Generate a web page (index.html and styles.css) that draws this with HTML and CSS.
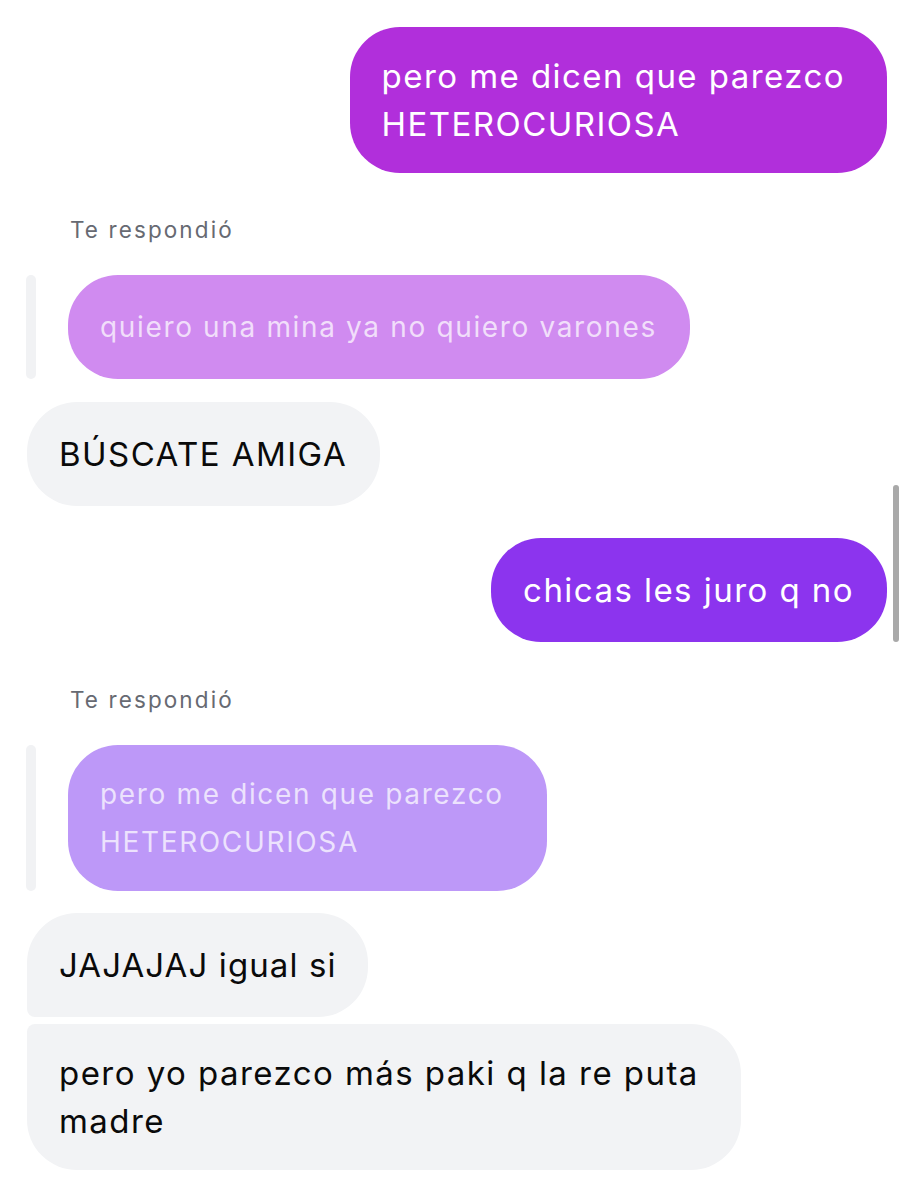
FILE: index.html
```html
<!DOCTYPE html>
<html lang="es">
<head>
<meta charset="utf-8">
<title>Chat</title>
<link rel="stylesheet" href="styles.css">
</head>
<body>
<div class="chat">
  <div class="bubble sent sent-a multi">pero me dicen que parezco<br>HETEROCURIOSA</div>

  <div class="label label-first">Te respondió</div>
  <div class="reply reply-first">
    <div class="reply-bar"></div>
    <div class="quote quote-a">quiero una mina ya no quiero varones</div>
  </div>
  <div class="bubble received gap-23">BÚSCATE AMIGA</div>

  <div class="bubble sent sent-b gap-32">chicas les juro q no</div>

  <div class="label label-second">Te respondió</div>
  <div class="reply reply-second">
    <div class="reply-bar"></div>
    <div class="quote quote-b multi">pero me dicen que parezco<br>HETEROCURIOSA</div>
  </div>
  <div class="bubble received group-top gap-22 tight">JAJAJAJ igual si</div>
  <div class="bubble received group-bottom multi gap-7">pero yo parezco más paki q la re puta<br>madre</div>
</div>
<div class="scrollbar"></div>
</body>
</html>
```
FILE: styles.css
```css
html, body {
  margin: 0;
  padding: 0;
  background: #ffffff;
}
body {
  font-family: Inter, "Noto Sans", "Liberation Sans", sans-serif;
  width: 907px;
  height: 1200px;
  overflow: hidden;
  position: relative;
}
.chat {
  display: flex;
  flex-direction: column;
  align-items: flex-start;
  padding: 27px 20px 0 27px;
}
.bubble {
  font-size: 33px;
  letter-spacing: 1.45px;
  line-height: 48px;
  padding: 28px 33px 28px 32px;
  border-radius: 50px;
  box-sizing: border-box;
  white-space: nowrap;
}
.bubble.multi {
  padding: 25px 42px 25px 32px;
}
.bubble.tight {
  letter-spacing: 1.1px;
  padding-right: 31px;
}
.sent {
  align-self: flex-end;
  color: #ffffff;
}
.sent-a { background: #b12fdb; }
.sent-b { background: #8c34ee; }
.received {
  background: #f2f3f5;
  color: #0a0a0a;
}
.group-top { border-bottom-left-radius: 8px; }
.group-bottom { border-top-left-radius: 8px; }
.gap-7 { margin-top: 7px; }
.gap-22 { margin-top: 22px; }
.gap-23 { margin-top: 23px; }
.gap-32 { margin-top: 32px; }
.label {
  font-size: 22.5px;
  letter-spacing: 2.1px;
  line-height: 28px;
  color: #676a72;
  margin-left: 43px;
}
.label-first { margin-top: 43px; }
.label-second { margin-top: 44px; }
.reply {
  display: flex;
  align-items: stretch;
  gap: 32px;
  margin-top: 31px;
}
.reply-bar {
  width: 10px;
  border-radius: 5px;
  background: #f1f2f4;
  margin-left: -1px;
}
.quote {
  font-size: 28px;
  letter-spacing: 1.65px;
  line-height: 48px;
  padding: 28px 33px 28px 32px;
  border-radius: 50px;
  color: rgba(255, 255, 255, 0.72);
  white-space: nowrap;
}
.quote.multi {
  padding: 25px 43px 25px 32px;
}
.quote-a { background: #d08bf0; }
.quote-b { background: #bd98f8; }
.scrollbar {
  position: absolute;
  left: 893px;
  top: 485px;
  width: 6px;
  height: 157px;
  border-radius: 3px;
  background: #a9a9a9;
}
```
